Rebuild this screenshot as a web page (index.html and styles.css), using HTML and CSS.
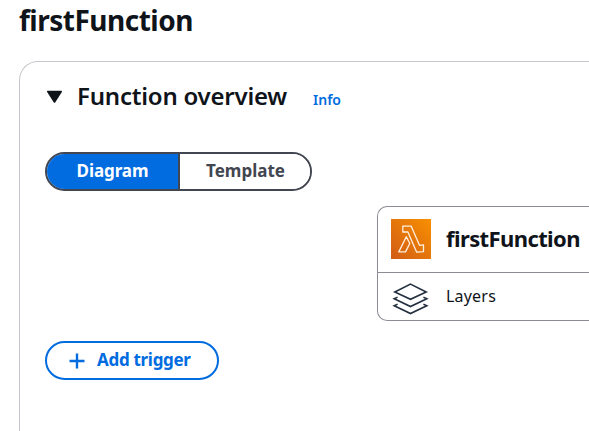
FILE: index.html
```html
<!DOCTYPE html>
<html lang="en">
<head>
<meta charset="utf-8">
<title>firstFunction</title>
<link rel="stylesheet" href="styles.css">
</head>
<body>
<h1 class="page-title">firstFunction</h1>
<section class="panel">
  <header class="panel-header">
    <svg class="caret" width="17" height="14" viewBox="0 0 17 14"><path d="M1.8 1.5h13.4L8.5 12z" fill="#0f141a" stroke="#0f141a" stroke-width="1.6" stroke-linejoin="round"/></svg>
    <h2 class="panel-title">Function overview</h2>
    <a class="info">Info</a>
  </header>
  <div class="segments">
    <button class="segment active"><span>Diagram</span></button>
    <button class="segment"><span>Template</span></button>
  </div>
  <div class="function-card">
    <div class="card-main">
      <svg class="lambda" width="40" height="40" viewBox="0 0 40 40">
        <defs><linearGradient id="orange" x1="0" y1="1" x2="1" y2="0"><stop offset="0" stop-color="#d05c17"/><stop offset="1" stop-color="#f99000"/></linearGradient></defs>
        <path d="M0 0h40v40H0z" fill="url(#orange)"/>
        <path d="M11.8 7.2h8.4L28.6 26.4l3.9-.6v6.8l-6.8.6L16.9 13h-5.1zM15.3 17.8l3.5 6.7-4.3 8.4H7.8z" fill="none" stroke="#fff0df" stroke-width="1.3" stroke-linejoin="round"/>
      </svg>
      <span class="card-name">firstFunction</span>
    </div>
    <div class="card-layers">
      <svg class="layers" width="38" height="34" viewBox="0 0 38 34" fill="none" stroke="#232f3e" stroke-width="1.6" stroke-linejoin="miter"><path d="M19.5 2.1 35.2 10 19.5 17.3 3.8 10z"/><path d="M6.6 15.1 3.2 16.7 19.5 24.5 35.8 16.7l-3.4-1.6M6.6 22.1l-3.4 1.6L19.5 31.5l16.3-7.8-3.4-1.6"/></svg>
      <span class="card-label">Layers</span>
    </div>
  </div>
  <button class="add-trigger">
    <svg width="16" height="16" viewBox="0 0 16 16"><path d="M8 .5v15M.5 8h15" stroke="#006ce0" stroke-width="2.4"/></svg>
    <span>Add trigger</span>
  </button>
</section>
</body>
</html>
```
FILE: styles.css
```css
* { box-sizing: border-box; }
body {
  margin: 0;
  height: 431px;
  overflow: hidden;
  background: #fff;
  color: #0f141a;
  font-family: "Noto Sans", sans-serif;
}
h1, h2 { margin: 0; white-space: nowrap; }
.page-title {
  height: 61px;
  padding: 2px 0 0 19px;
  font-size: 28px;
  line-height: 36px;
  font-weight: 700;
  letter-spacing: -0.5px;
}
.panel {
  height: 370px;
  margin-left: 19px;
  padding: 18px 0 0 25px;
  border: 1px solid #c6c6cd;
  border-width: 1px 0 0 1px;
  border-radius: 19px 0 0 0;
}
.panel-header { display: flex; height: 34px; align-items: center; }
.caret { margin: 0 14px 0 1px; }
.panel-title {
  margin-top: -2px;
  font-size: 24px;
  line-height: 34px;
  font-weight: 600;
  letter-spacing: -0.22px;
}
.info {
  margin: 4px 0 0 26px;
  color: #006ce0;
  font-size: 14px;
  font-weight: 600;
}
button {
  padding: 0;
  background: #fff;
  font: 600 17px/24px "Noto Sans", sans-serif;
}
.segments {
  display: flex;
  width: 267px;
  height: 39px;
  margin-top: 38px;
  overflow: hidden;
  border: 2px solid #424650;
  border-radius: 20px;
}
.segment {
  flex: 1;
  padding: 0 0 2px 1px;
  border: 0;
  color: #424650;
  font-weight: 700;
  letter-spacing: 0;
}
.segment.active {
  flex: 0 0 133px;
  padding: 0 0 2px;
  border-right: 2px solid #424650;
  background: #006ce0;
  color: #fff;
  letter-spacing: -0.1px;
}
.function-card {
  height: 115px;
  margin: 15px 0 0 332px;
  border: 1px solid #8c8c94;
  border-right: 0;
  border-radius: 10px 0 0 10px;
}
.card-main {
  display: flex;
  height: 66px;
  align-items: center;
  padding: 0 0 2px 13px;
  border-bottom: 1px solid #8c8c94;
}
.card-name {
  margin: -2px 0 0 15px;
  font-size: 22px;
  font-weight: 700;
  letter-spacing: -0.6px;
}
.card-layers { display: flex; height: 47px; align-items: center; padding-left: 13px; }
.layers { margin-top: 5px; }
.card-label { margin: -2px 0 0 17px; font-size: 16px; letter-spacing: 0.2px; }
.add-trigger {
  display: flex;
  align-items: center;
  width: 174px;
  height: 39px;
  margin-top: 20px;
  padding-left: 22px;
  border: 2px solid #006ce0;
  border-radius: 20px;
  color: #006ce0;
}
.add-trigger span {
  margin: -2px 0 0 12px;
  font-weight: 700;
  letter-spacing: -0.3px;
  white-space: nowrap;
}
```
